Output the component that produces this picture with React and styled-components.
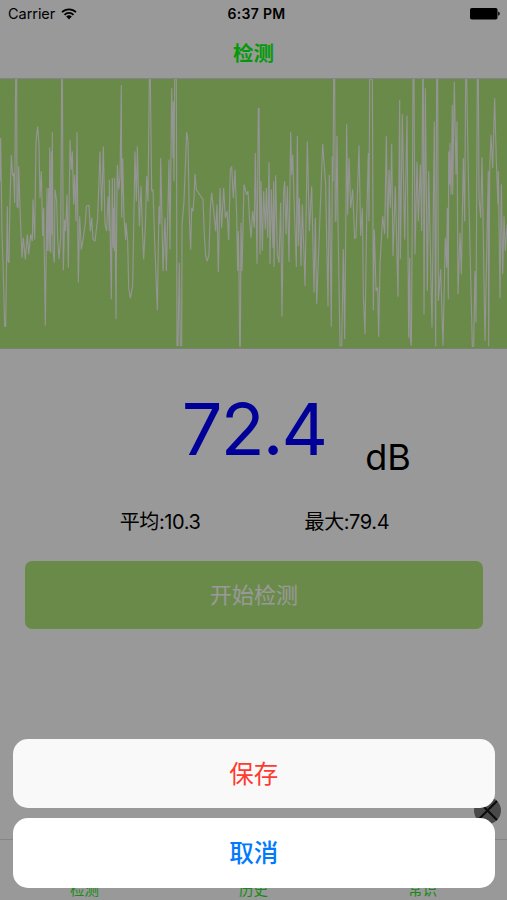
import React from 'react'
import styled, { createGlobalStyle } from 'styled-components'

const GlobalStyle = createGlobalStyle`
    * {
        box-sizing: border-box;
    }
    body {
        margin: 0;
        background: #ffffff;
        font-family: Inter, "Noto Sans CJK SC", sans-serif;
    }
`

const Screen = styled.div`
    position: relative;
    display: flex;
    flex-direction: column;
    width: 507px;
    height: 900px;
    overflow: hidden;
    background: #ffffff;
    color: #000000;
`

// Status bar
const StatusBar = styled.div`
    display: grid;
    grid-template-columns: 1fr auto 1fr;
    align-items: center;
    height: 27px;
    padding: 0 7px 0 8px;
    line-height: 27px;
`
const Carrier = styled.div`
    display: flex;
    align-items: center;
    gap: 6px;
    font-size: 14.5px;
    letter-spacing: -0.05px;
`
const Clock = styled.div`
    font-size: 14px;
    font-weight: 600;
    letter-spacing: 0.3px;
    padding-left: 5px;
`
const Battery = styled.svg`
    justify-self: end;
`

const NavBar = styled.h1`
    display: flex;
    align-items: center;
    justify-content: center;
    height: 52px;
    margin: 0;
    padding-bottom: 2px;
    border-bottom: 1px solid #e0d8e0;
    color: #08ff10;
    font-size: 20.5px;
    font-weight: 700;
`

// Recorded wave
const WavePanel = styled.div`
    height: 270px;
    background: #b1e77b;
    border-bottom: 1px solid #c8dcc0;
`
const WaveSvg = styled.svg`
    display: block;
    width: 100%;
    height: 100%;
`

// Reading
const Reading = styled.div`
    display: grid;
    grid-template-columns: 1fr auto 1fr;
    align-items: end;
    height: 134px;
    padding-bottom: 4px;
`
const Level = styled.div`
    grid-column: 2;
    color: #0000ff;
    font-size: 72px;
    line-height: 88px;
    padding: 0 0 6px 1px;
    letter-spacing: -1.9px;
`
const Unit = styled.div`
    font-size: 36px;
    line-height: 44px;
    padding-left: 39px;
`
const Stats = styled.div`
    display: flex;
    justify-content: center;
    gap: 104px;
    height: 78px;
    padding: 24px 0 0 2px;
    font-size: 20px;
    line-height: 31px;
    letter-spacing: -0.4px;
`
const StartButton = styled.button`
    flex: none;
    height: 68px;
    margin: 0 24px 0 25px;
    padding: 0 0 4px;
    border: 0;
    border-radius: 7px;
    background: #b1e77b;
    color: #ffffff;
    font: inherit;
    font-size: 22px;
`

const TabBar = styled.div`
    display: grid;
    grid-template-columns: repeat(3, 1fr);
    align-items: end;
    height: 61px;
    margin-top: auto;
    padding-bottom: 1px;
    border-top: 1px solid #dedede;
`
const Tab = styled.div`
    color: #28e81e;
    font-size: 14.5px;
    line-height: 19px;
    text-align: center;
`
const CloseBadge = styled.div`
    position: absolute;
    right: 6px;
    bottom: 76px;
    width: 27px;
    height: 27px;
    border-radius: 50%;
    background: #7a7a7a;
`

// Action sheet
const Backdrop = styled.div`
    position: absolute;
    inset: 0;
    display: flex;
    flex-direction: column;
    justify-content: flex-end;
    gap: 10px;
    padding: 0 12.5px 12.5px 13px;
    background: rgba(0, 0, 0, 0.4);
`
const SheetButton = styled.button`
    height: 69.5px;
    padding: 0 0 2px;
    border: 0;
    border-radius: 15px;
    background: ${props => props.$bg || "#ffffff"};
    color: ${props => props.$color || "#007aff"};
    font: inherit;
    font-size: 24.5px;
    font-weight: ${props => props.$weight || "400"};
`

// Sample buffers, each one drawn from its own x offset
const buffers = [
    {
        x: 0,
        points: '0,320 2,190 6,480 10,600 14,757 17,757 22,395 24,560 27,565 30,380 34,242 38,305 41,295 44,385 47,12 50,12 51,395 54,400 56,275 60,400 66,550 70,490 76,555 82,480 86,540 92,480 97,500 99,375 104,495 108,200 113,155 117,210 120,370 124,290 128,485 131,400 136,755 141,340 143,530 146,340 148,530 149,218 152,535 154,230 156,480 157,172 159,530 163,565 165,345 170,380 173,490 177,555 182,490 185,12 187,12 190,588 194,435 197,470 201,360 205,580 210,195 214,285 217,230 221,390 224,300 228,440 231,172 235,625 239,425 244,525 250,490 256,445 259,395 267,392 271,470 275,430 279,495 285,500 293,430 300,230 305,410 310,215 315,450 320,470 324,365 328,470 328,315 334,675 337,310 339,520 341,400 343,530 344,310 348,735 350,440 352,270 356,345 360,310 364,30 365,430 368,250 372,430 377,497 378,445 383,500 386,640 391,672 398,635 405,230 409,380 412,215 418,455 423,335 427,460 431,555 436,460 440,305 444,380 448,12 451,12 455,350 459,345 464,500 472,708 477,395 480,450 482,250 489,590 495,430 499,590 504,400',
    },
    {
        x: 504,
        points: '0,400 3,255 6,525 11,40 15,250 16,80 18,320 20,12 25,12 27,815 30,815 34,565 37,815 41,815 42,450 48,380 56,172 60,200 64,430 68,525 71,400 75,410 78,370 81,298 85,345 95,360 105,375 109,480 113,545 118,560 123,540 127,400 131,355 137,410 143,470 147,390 151,593 156,340 161,460 167,340 172,430 177,410 182,497 187,285 191,275 196,370 201,285 206,420 209,590 211,470 213,590 215,817 217,817 219,445 222,590 228,330 236,360 240,350 245,440 249,490 254,410 259,460 262,235 267,568 271,100 273,100 276,540 279,320 283,530 287,350 292,465 295,340 299,490 303,262 306,570 310,345 315,520 317,320 318,578 323,302 328,540 333,565 338,385 342,727 347,350 350,320 354,480 358,335 363,562 368,172 371,300 374,240 379,400 385,578 388,183 391,515 394,370 399,575 403,390 411,635 418,200 424,470 431,335 438,655 442,430 446,690 454,480 464,208 473,330 480,697 484,300 490,757 493,245 495,320 497,12 500,12 502,440 504,440',
    },
    {
        x: 1008,
        points: '0,440 3,183 6,440 12,815 17,815 22,525 26,795 29,500 32,148 35,420 39,250 44,400 50,345 56,492 60,490 69,212 74,485 79,400 82,660 87,780 92,440 97,235 99,440 101,12 109,12 112,708 115,465 120,650 125,640 128,788 132,570 140,425 146,478 151,183 155,492 159,285 163,400 167,207 171,545 178,335 186,668 191,75 193,555 199,118 206,495 213,123 218,790 221,550 223,795 226,815 229,410 231,12 234,12 237,540 243,262 247,440 253,270 257,470 260,12 262,12 264,720 268,40 274,650 278,290 288,760 295,140 299,817 302,12 305,12 307,680 314,585 321,815 328,490 332,580 334,400 337,675 338,230 341,330 342,205 345,360 347,240 349,90 350,360 355,20 360,300 363,140 366,660 372,475 376,600 382,250 386,440 389,12 392,12 397,300 405,650 409,817 413,817 417,590 420,745 424,12 427,12 429,370 434,430 438,248 447,800 457,290 458,817 461,290 465,180 470,280 476,70 481,260 486,390 487,290 492,672 496,330 500,600 504,425 508,530 513,450',
    },
]

const tabs = ['检测', '历史', '常识']

function Wave() {
    return (
        <WavePanel>
            <WaveSvg viewBox="0 12 1521 810" preserveAspectRatio="none">
                {buffers.map((buffer) => (
                    <polyline
                        key={buffer.x}
                        transform={`translate(${buffer.x} 0)`}
                        points={buffer.points}
                        fill="none"
                        stroke="#f8f8f8"
                        strokeWidth="3.4"
                        strokeLinejoin="bevel"
                    />
                ))}
            </WaveSvg>
        </WavePanel>
    )
}

export default function App() {
    return (
        <Screen>
            <GlobalStyle />
            <StatusBar>
                <Carrier>
                    Carrier
                    <svg width="16" height="12" viewBox="0 0 16 12">
                        <path d="M1 4.2a10 10 0 0 1 14 0M3.5 6.8a6.4 6.4 0 0 1 9 0" fill="none" stroke="#000" strokeWidth="1.8" />
                        <path d="M8 11.4 5.2 8.6a4 4 0 0 1 5.6 0z" fill="#000" />
                    </svg>
                </Carrier>
                <Clock>6:37 PM</Clock>
                <Battery width="30" height="12" viewBox="0 0 30 12">
                    <rect x="0" y="0" width="27.5" height="11.5" rx="1.8" fill="#000" />
                    <path d="M28.2 3.6a2.2 2.2 0 0 1 0 4.2z" fill="#000" />
                </Battery>
            </StatusBar>
            <NavBar>检测</NavBar>
            <Wave />
            <Reading>
                <Level>72.4</Level>
                <Unit>dB</Unit>
            </Reading>
            <Stats>
                <span>平均:10.3</span>
                <span>最大:79.4</span>
            </Stats>
            <StartButton>开始检测</StartButton>
            <TabBar>
                {tabs.map((name) => <Tab key={name}>{name}</Tab>)}
            </TabBar>
            <CloseBadge>
                <svg width="27" height="27" viewBox="0 0 27 27">
                    <path d="M4 4l19 19M23 4L4 23" stroke="#111" strokeWidth="2" />
                </svg>
            </CloseBadge>
            <Backdrop>
                <SheetButton $bg="#f9f9f9" $color="#ff3b30">保存</SheetButton>
                <SheetButton $weight="500">取消</SheetButton>
            </Backdrop>
        </Screen>
    )
}
